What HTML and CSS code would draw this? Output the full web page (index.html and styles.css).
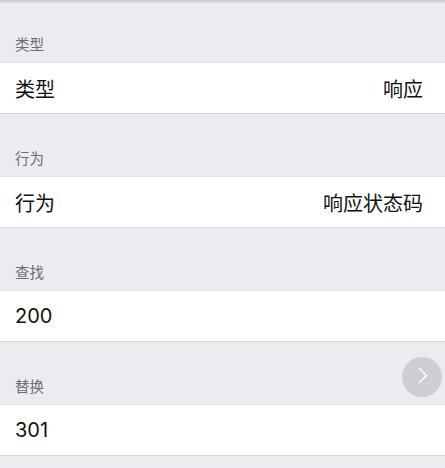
FILE: index.html
```html
<!DOCTYPE html>
<html lang="zh-CN">
<head>
<meta charset="utf-8">
<link rel="stylesheet" href="styles.css">
</head>
<body>
<div class="page">
  <div class="topline"></div>
  <div class="section-header first"><span>类型</span></div>
  <div class="row"><span>类型</span><span class="detail">响应</span></div>
  <div class="section-header"><span>行为</span></div>
  <div class="row"><span>行为</span><span class="detail">响应状态码</span></div>
  <div class="section-header"><span>查找</span></div>
  <div class="row"><span>200</span></div>
  <div class="section-header"><span>替换</span></div>
  <div class="row"><span>301</span></div>
  <div class="fab">
    <svg width="40" height="40" viewBox="0 0 40 40"><path d="M17.5 11.5 L24.5 18.5 L17.5 25.5" fill="none" stroke="#ffffff" stroke-width="1.4" stroke-linecap="round" stroke-linejoin="round"/></svg>
  </div>
</div>
</body>
</html>
```
FILE: styles.css
```css
html, body {
  margin: 0;
  padding: 0;
  background: #ebebf0;
}
.page {
  position: relative;
  width: 445px;
  height: 468px;
  overflow: hidden;
  font-family: Inter, "Noto Sans CJK SC", sans-serif;
}
.topline {
  height: 3px;
  background: linear-gradient(#c9c9cd, #dfdfe3);
}
.section-header {
  height: 62px;
  box-sizing: border-box;
  display: flex;
  align-items: flex-end;
  padding: 0 15px 8px;
  font-size: 14.5px;
  line-height: 18px;
  color: #6d6d72;
}
.section-header.first {
  height: 59px;
}
.row {
  height: 50px;
  background: #ffffff;
  border-top: 1px solid #e2e2e6;
  border-bottom: 1px solid #d8d8dc;
  display: flex;
  align-items: center;
  justify-content: space-between;
  padding: 0 22px 0 15px;
  font-size: 20px;
  color: #111111;
}
.detail {
  color: #111111;
}
.fab {
  position: absolute;
  left: 402px;
  top: 357px;
  width: 40px;
  height: 40px;
  border-radius: 50%;
  background: #cfcfd3;
}
.fab svg {
  display: block;
}
```
